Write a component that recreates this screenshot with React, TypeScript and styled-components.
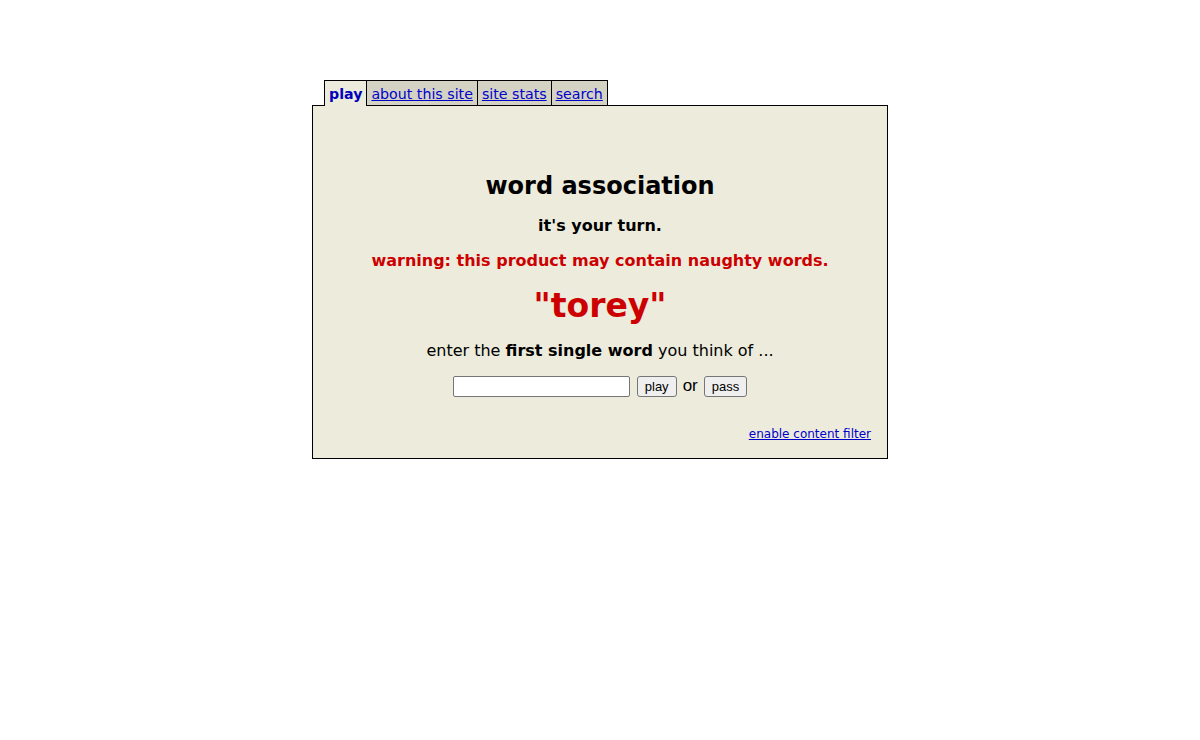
import React from 'react';
import styled, { createGlobalStyle } from 'styled-components';

const GlobalStyle = createGlobalStyle`
  body {
    margin: 0;
    background: #ffffff;
    font-family: "DejaVu Sans", Verdana, sans-serif;
  }
`;

const panelBg = '#ecebdc';

const Page = styled.div`
  width: 576px;
  margin: 80px auto 0;
`;

const TabBar = styled.nav`
  display: flex;
  padding-left: 12px;
  position: relative;
  z-index: 1;
`;

const Tab = styled.a<{ $active?: boolean }>`
  display: block;
  line-height: 26px;
  padding: 0 4px;
  font-size: 14.2px;
  border: 1px solid #000;
  border-bottom: none;
  margin-left: -1px;
  margin-bottom: ${({ $active }) => ($active ? '-1px' : '0')};
  height: ${({ $active }) => ($active ? '25px' : '24px')};
  background: ${({ $active }) => ($active ? panelBg : '#d3d2c3')};
  color: ${({ $active }) => ($active ? '#0000bb' : '#0000cc')};
  font-weight: ${({ $active }) => ($active ? 'bold' : 'normal')};
  text-decoration: ${({ $active }) => ($active ? 'none' : 'underline')};
  cursor: pointer;

  &:first-child {
    margin-left: 0;
  }
`;

const Panel = styled.section`
  background: ${panelBg};
  border: 1px solid #000;
  padding: 66px 16px 16px;
  text-align: center;
  color: #000;
`;

const Title = styled.h1`
  font-size: 24px;
  line-height: 28px;
  font-weight: bold;
  margin: 0 0 16px;
`;

const Turn = styled.h3`
  font-size: 16px;
  line-height: 19px;
  font-weight: bold;
  margin: 0 0 16px;
`;

const Warning = styled.p`
  font-size: 16px;
  line-height: 19px;
  font-weight: bold;
  color: #cc0000;
  margin: 0 0 17px;
`;

const Word = styled.h2`
  font-size: 33px;
  line-height: 38px;
  font-weight: bold;
  color: #cc0000;
  margin: 0 0 16px;
`;

const Prompt = styled.p`
  font-size: 16px;
  line-height: 19px;
  margin: 0 0 16px;

  b {
    font-weight: bold;
  }
`;

const Form = styled.form`
  display: flex;
  justify-content: center;
  align-items: center;
  gap: 6px;
  height: 21px;
`;

const WordInput = styled.input`
  width: 177px;
  height: 21px;
  box-sizing: border-box;
  border: 1px solid #767676;
  border-radius: 2px;
  background: #fff;
  margin: 0 1px 0 0;
`;

const Button = styled.button`
  font-family: "Liberation Sans", Arial, sans-serif;
  font-size: 13px;
  height: 21px;
  padding: 0 7px;
  margin: 0;
  background: #efefef;
  border: 1px solid #767676;
  border-radius: 3px;
  color: #000;
`;

const Or = styled.span`
  font-family: "Liberation Sans", Arial, sans-serif;
  font-size: 17px;
  line-height: 17px;
  margin-top: -3px;
`;

const Footer = styled.div`
  display: flex;
  justify-content: flex-end;
  margin-top: 30px;
  line-height: 15px;
`;

const FilterLink = styled.a`
  font-size: 12px;
  color: #0000cc;
  text-decoration: underline;
  cursor: pointer;
`;

const App = () => {
  return (
    <>
      <GlobalStyle />
      <Page>
        <TabBar>
          <Tab $active>play</Tab>
          <Tab>about this site</Tab>
          <Tab>site stats</Tab>
          <Tab>search</Tab>
        </TabBar>
        <Panel>
          <Title>word association</Title>
          <Turn>it's your turn.</Turn>
          <Warning>warning: this product may contain naughty words.</Warning>
          <Word>"torey"</Word>
          <Prompt>
            enter the <b>first single word</b> you think of ...
          </Prompt>
          <Form onSubmit={(e) => e.preventDefault()}>
            <WordInput type="text" />
            <Button type="submit">play</Button>
            <Or>or</Or>
            <Button type="button">pass</Button>
          </Form>
          <Footer>
            <FilterLink>enable content filter</FilterLink>
          </Footer>
        </Panel>
      </Page>
    </>
  );
};

export default App;
